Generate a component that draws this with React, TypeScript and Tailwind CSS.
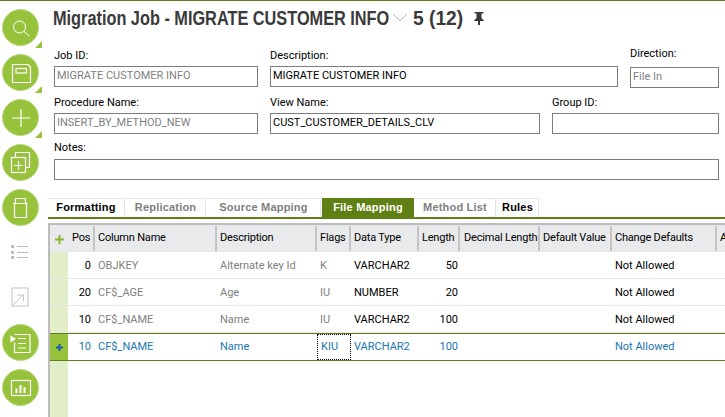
import React from "react";

function Circle({ children, corner }: { children: React.ReactNode; corner?: boolean }) {
  return (
    <div className="relative h-9 w-9 shrink-0">
      <div className="flex h-[37px] w-[37px] items-center justify-center rounded-full bg-[#97c33c] border border-[#b9d87e]">
        <svg width="24" height="24" viewBox="0 0 24 24" fill="none" stroke="white" strokeWidth="1">
          {children}
        </svg>
      </div>
      {corner && (
        <div className="absolute left-[33px] top-[32px] h-0 w-0 border-b-[7px] border-l-[7px] border-b-[#97c33c] border-l-transparent" />
      )}
    </div>
  );
}

function Sidebar() {
  return (
    <div className="flex w-12 shrink-0 flex-col gap-[9px] pl-[2px] pt-[8px]">
      <Circle corner>
        <circle cx="10.5" cy="11" r="6" />
        <path d="M15 15.5l5.5 4.5" />
      </Circle>
      <Circle corner>
        <path d="M3.5 3.5h15.5l2.5 2.5v15.5h-18z" strokeWidth="1.2" />
        <rect x="7" y="7.5" width="10.5" height="4.5" strokeWidth="1.2" />
      </Circle>
      <Circle corner>
        <path d="M12 3v18M3 12h18" strokeWidth="1.2" />
      </Circle>
      <Circle>
        <path d="M6.5 6.5v-5h14v15h-4" strokeWidth="1.2" />
        <rect x="2.5" y="6.5" width="14" height="15" strokeWidth="1.2" />
        <path d="M9.5 10v9M5 14.5h9" strokeWidth="1.2" />
      </Circle>
      <Circle>
        <path d="M5.5 7.5h12v14h-12zM6.5 7.5v-5h10v5M4 7.5h15" strokeWidth="1.2" />
      </Circle>
      <div className="flex h-9 w-9 items-center justify-center">
        <svg width="20" height="18" viewBox="0 0 20 18" fill="none">
          <rect x="1" y="2" width="3" height="3" fill="#bdbdbd" />
          <rect x="1" y="8" width="3" height="3" fill="#bdbdbd" />
          <rect x="1" y="13" width="3" height="3" fill="#bdbdbd" />
          <path d="M7 3.5h11M7 9.5h11M7 14.5h11" stroke="#bdbdbd" />
        </svg>
      </div>
      <div className="flex h-9 w-9 items-center justify-center">
        <svg width="18" height="20" viewBox="0 0 18 20" fill="none" stroke="#c2c2c2">
          <rect x="1" y="1" width="16" height="18" />
          <path d="M1.5 18.5L12 8M6 8h6.5v6" />
        </svg>
      </div>
      <Circle>
        <path d="M5.5 3.5h15.5v18h-15.5v-10" strokeWidth="1.2" />
        <path d="M9 7.5h8M9 12.5h8M9 17h8" strokeWidth="1.2" />
        <path d="M1.5 4.5l5.5 3.5-5.5 3.5z" fill="white" stroke="none" />
      </Circle>
      <Circle>
        <rect x="2.5" y="4.5" width="19" height="15" strokeWidth="1.2" />
        <path d="M7.5 17v-4.5M11.5 17V9M15.5 17v-6" strokeWidth="2" />
      </Circle>
    </div>
  );
}

function Field({
  label,
  value,
  muted,
  className,
  gap = "mt-[3px]",
}: {
  label: string;
  value: string;
  muted?: boolean;
  className?: string;
  gap?: string;
}) {
  return (
    <div className={className}>
      <div className="h-[14px] text-[11px] leading-[14px] text-black">{label}</div>
      <div
        className={`${gap} flex h-[21px] items-center border border-[#7d7d7d] px-[2px] text-[11px] ${
          muted ? "text-[#808080]" : "text-black"
        }`}
      >
        {value}
      </div>
    </div>
  );
}

const tabs = [
  { name: "Formatting", w: "w-[77px]", color: "text-black" },
  { name: "Replication", w: "w-[80px]", color: "text-[#808080]" },
  { name: "Source Mapping", w: "w-[114px]", color: "text-[#808080]" },
  { name: "File Mapping", w: "w-[92px]", color: "text-white", active: true },
  { name: "Method List", w: "w-[81px]", color: "text-[#808080]" },
  { name: "Rules", w: "w-[42px]", color: "text-black" },
];

const columns = [
  { name: "Pos", w: "w-[27px]", pad: "pl-[4px]" },
  { name: "Column Name", w: "w-[122px]", pad: "pl-[3px]" },
  { name: "Description", w: "w-[100px]", pad: "pl-[3px]" },
  { name: "Flags", w: "w-[34px]", pad: "pl-[3px]" },
  { name: "Data Type", w: "w-[68px]", pad: "pl-[3px]" },
  { name: "Length", w: "w-[41px]", pad: "pl-[3px]" },
  { name: "Decimal Length", w: "w-[80px]", pad: "pl-[4px]" },
  { name: "Default Value", w: "w-[72px]", pad: "pl-[3px]" },
  { name: "Change Defaults", w: "w-[105px]", pad: "pl-[3px]" },
  { name: "A", w: "w-[20px]", pad: "pl-[3px]" },
];

const rows = [
  { pos: "0", col: "OBJKEY", desc: "Alternate key Id", flags: "K", type: "VARCHAR2", len: "50" },
  { pos: "20", col: "CF$_AGE", desc: "Age", flags: "IU", type: "NUMBER", len: "20" },
  { pos: "10", col: "CF$_NAME", desc: "Name", flags: "IU", type: "VARCHAR2", len: "100" },
];

function Row({ r }: { r: (typeof rows)[number] }) {
  return (
    <div className="flex h-[27px] border-b border-[#e8e8e8] text-[11px]">
      <div className="w-[18px] shrink-0 bg-[#e2edc9]" />
      <div className="flex items-center pt-[2px]">
        <div className="w-[27px] shrink-0 pr-[4px] text-right text-black">{r.pos}</div>
        <div className="w-[122px] shrink-0 pl-[3px] text-[#808080]">{r.col}</div>
        <div className="w-[100px] shrink-0 pl-[3px] text-[#808080]">{r.desc}</div>
        <div className="w-[34px] shrink-0 pl-[3px] text-[#808080]">{r.flags}</div>
        <div className="w-[68px] shrink-0 pl-[3px] text-black">{r.type}</div>
        <div className="w-[41px] shrink-0 pr-[2px] text-right text-black">{r.len}</div>
        <div className="w-[80px] shrink-0" />
        <div className="w-[72px] shrink-0" />
        <div className="w-[105px] shrink-0 pl-[3px] text-black">Not Allowed</div>
      </div>
    </div>
  );
}

export default function App() {
  return (
    <div className="flex h-[417px] w-[725px] overflow-hidden border-t border-[#5f7f14] bg-white font-['Roboto','Liberation_Sans',sans-serif]">
      <Sidebar />
      <div className="min-w-0 flex-1 overflow-hidden">
        <div className="flex h-[31px] items-center pl-[5px] pt-[2px] font-['Liberation_Sans',sans-serif] text-[20px] font-bold text-[#3a3a3a]">
          <span className="inline-block w-[336px] origin-left scale-x-[.815] whitespace-nowrap">
            Migration Job - MIGRATE CUSTOMER INFO
          </span>
          <svg width="16" height="10" viewBox="0 0 16 10" fill="none" stroke="#b5b5b5" className="ml-[3px]">
            <path d="M1 1l7 7 7-7" />
          </svg>
          <span className="ml-[5px] inline-block w-[51px] origin-left scale-x-[.96] whitespace-nowrap">5 (12)</span>
          <svg width="12" height="14" viewBox="0 0 12 14" fill="#3a3a3a" className="ml-[9px]">
            <path d="M1.5 1h9v1.5H8.5V7L11 9.5V10H7v4H5v-4H1v-.5L3.5 7V2.5h-2z" />
          </svg>
        </div>

        <div className="px-[6px]">
          <div className="mt-[17px] flex gap-[12px]">
            <Field label="Job ID:" value="MIGRATE CUSTOMER INFO" muted className="w-[204px]" />
            <Field label="Description:" value="MIGRATE CUSTOMER INFO" className="w-[348px]" />
            <Field label="Direction:" value="File In" muted gap="mt-[6px]" className="-mt-[2px] w-[89px]" />
          </div>
          <div className="mt-[8px] flex gap-[12px]">
            <Field label="Procedure Name:" value="INSERT_BY_METHOD_NEW" muted className="w-[204px]" />
            <Field label="View Name:" value="CUST_CUSTOMER_DETAILS_CLV" className="w-[270px]" />
            <Field label="Group ID:" value="" className="w-[167px]" />
          </div>
          <div className="mt-[7px]">
            <Field label="Notes:" value="" gap="mt-[4px]" />
          </div>
        </div>

        <div className="mt-[18px] flex h-[21px] border-b-2 border-[#5f7f14] font-['Liberation_Sans',sans-serif] text-[11px] font-bold tracking-[.2px]">
          {tabs.map((t) => (
            <div
              key={t.name}
              className={`mr-[1px] flex items-center justify-center border-t pb-[2px] ${t.w} ${t.color} ${
                t.active ? "border-[#5f7f14] bg-[#5f7f14]" : "border-[#e5e5e5] border-r"
              }`}
            >
              {t.name}
            </div>
          ))}
        </div>

        <div className="mt-[4px] border-l-2 border-t-2 border-[#bcbcbc]">
          <div className="flex h-[27px] items-center bg-[#e9eaec] pb-[1px] text-[11px] tracking-[-.2px] text-black">
            <div className="flex w-[18px] shrink-0 justify-center pt-[2px]">
              <svg width="11" height="11" viewBox="0 0 11 11" fill="none" stroke="#8ab32f" strokeWidth="2">
                <path d="M5.5 1v9M1 5.5h9" />
              </svg>
            </div>
            {columns.map((c) => (
              <div key={c.name} className={`${c.w} shrink-0 whitespace-nowrap`}>
                <div className={`flex h-[25px] items-center border-r-2 border-[#c4c4c4] ${c.pad}`}>{c.name}</div>
              </div>
            ))}
          </div>
          {rows.map((r) => (
            <Row key={r.col} r={r} />
          ))}
          <div className="flex h-[28px] items-center border-y border-[#5f7f14] text-[11px] text-[#1a76b0]">
            <div className="flex w-[18px] shrink-0 items-center justify-center self-stretch bg-[#97c33c]">
              <svg width="7" height="7" viewBox="0 0 7 7" fill="none" stroke="#1a5fa0" strokeWidth="2">
                <path d="M3.5 0v7M0 3.5h7" />
              </svg>
            </div>
            <div className="w-[27px] shrink-0 pr-[4px] text-right">10</div>
            <div className="w-[122px] shrink-0 pl-[3px]">CF$_NAME</div>
            <div className="w-[100px] shrink-0 pl-[3px]">Name</div>
            <div className="flex h-full w-[34px] shrink-0 items-center border border-dotted border-black pl-[3px]">KIU</div>
            <div className="w-[68px] shrink-0 pl-[3px]">VARCHAR2</div>
            <div className="w-[41px] shrink-0 pr-[2px] text-right">100</div>
            <div className="w-[80px] shrink-0" />
            <div className="w-[72px] shrink-0" />
            <div className="w-[105px] shrink-0 pl-[3px]">Not Allowed</div>
          </div>
          <div className="h-[80px] w-[18px] bg-[#e2edc9]" />
        </div>
      </div>
    </div>
  );
}
